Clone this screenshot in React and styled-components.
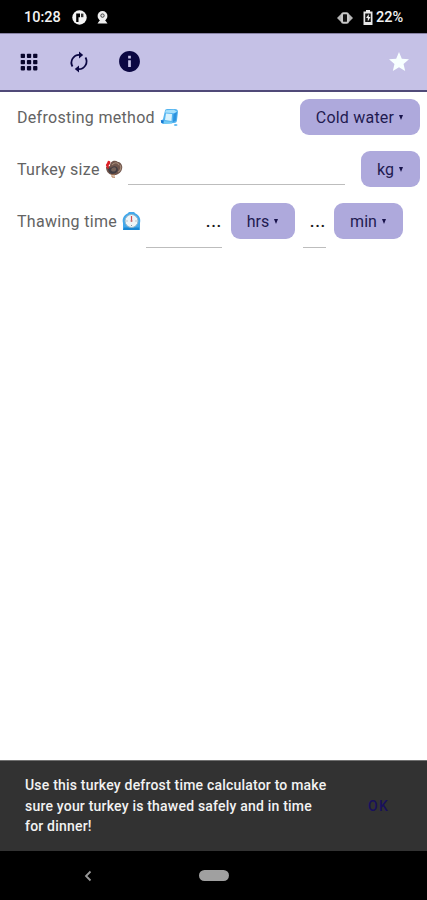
import React from 'react';
import styled, { createGlobalStyle } from 'styled-components';

const GlobalStyle = createGlobalStyle`
    body {
        margin: 0;
        background-color: #ffffff;
        font-family: Roboto, "Liberation Sans", sans-serif;
    }

    * {
        box-sizing: border-box;
    }

    svg {
        display: block;
        flex: none;
    }
`;

const Screen = styled.div`
    display: flex;
    flex-direction: column;
    width: 427px;
    height: 900px;
    overflow: hidden;
`;

const StatusBar = styled.header`
    display: flex;
    align-items: center;
    height: 33px;
    padding: 2px 23px 0 24px;
    background-color: #000000;
    color: #f2f2f2;
    font-size: 14.5px;
    font-weight: 500;
`;

const StatusText = styled.span`
    width: ${props => props.$width}px;
    white-space: nowrap;
`;

const StatusIcons = styled.div`
    display: flex;
    align-items: center;
    gap: ${props => props.$gap}px;
    margin-left: ${props => props.$left};
    margin-right: ${props => props.$right || 0}px;
`;

const AppBar = styled.nav`
    display: flex;
    align-items: center;
    height: 59px;
    padding: 0 16px 0 17px;
    border-top: 1px solid #8681a3;
    border-bottom: 2px solid #504a78;
    background-color: #c5c1e6;
`;

const IconButton = styled.button`
    display: flex;
    align-items: center;
    justify-content: center;
    width: 24px;
    height: 24px;
    margin-right: ${props => props.$right || 0}px;
    margin-left: ${props => props.$push ? 'auto' : 0};
    padding: 0 0 1px;
    border: 0;
    background: none;
    color: ${props => props.$color || '#0b0742'};
`;

const Form = styled.main`
    display: flex;
    flex: 1;
    flex-direction: column;
    gap: 16px;
    padding: 7px 7px 0 17px;
`;

const Row = styled.div`
    display: flex;
    align-items: center;
    height: 36px;
`;

const Label = styled.label`
    width: ${props => props.$width}px;
    color: #636363;
    font-size: 16px;
    letter-spacing: ${props => props.$spacing}px;
    white-space: nowrap;
`;

const Field = styled.div`
    align-self: flex-start;
    width: ${props => props.$width}px;
    height: ${props => props.$height}px;
    margin-left: ${props => props.$left}px;
    padding-top: 8px;
    border-bottom: 1px solid #bdbdbd;
    color: #161616;
    font-size: 17px;
    font-weight: 500;
    letter-spacing: 0.7px;
    line-height: 20px;
    text-align: right;
`;

const UnitButton = styled.button`
    display: flex;
    align-items: center;
    justify-content: center;
    gap: 5px;
    width: ${props => props.$width}px;
    height: 36px;
    margin-left: ${props => props.$left || 'auto'};
    padding: 0 1px 0 0;
    border: 0;
    border-radius: 9px;
    background-color: #aea9dc;
    color: #1f1a50;
    font-family: inherit;
    font-size: 16px;
    letter-spacing: ${props => props.$spacing || 0}px;
    white-space: nowrap;
`;

const Caret = styled.span`
    width: 0;
    height: 0;
    border-top: 5px solid #17124a;
    border-right: 2.5px solid transparent;
    border-left: 2.5px solid transparent;
`;

const Snackbar = styled.div`
    display: flex;
    align-items: center;
    justify-content: space-between;
    height: 91px;
    padding: 0 38px 0 25px;
    border-top: 1px solid #707070;
    background-color: #323232;
`;

const Message = styled.p`
    margin: 0;
    color: #f2f2f2;
    font-size: 14px;
    font-weight: 500;
    letter-spacing: 0.2px;
    line-height: 20.5px;
    white-space: nowrap;
`;

const Confirm = styled.button`
    padding: 0;
    border: 0;
    background: none;
    color: #18105c;
    font-family: inherit;
    font-size: 14px;
    font-weight: 500;
    letter-spacing: 1.2px;
`;

const NavigationBar = styled.footer`
    display: flex;
    align-items: center;
    height: 49px;
    padding-left: 83px;
    background-color: #000000;
`;

const HomePill = styled.span`
    width: 30px;
    height: 11px;
    margin-left: 107px;
    border-radius: 6px;
    background-color: #a0a0a0;
`;

const ParkingIcon = () => (
    <svg width="15" height="15" viewBox="0 0 15 15">
        <circle cx="7.5" cy="7.5" r="7.2" fill="#f4f4f4" />
        <path d="M4.2 12V3.6H8V7.2H6.5V12Z" fill="#000" />
        <path d="M9 3.6h2.4v3.6H9z" fill="#333" />
    </svg>
);

const CameraIcon = () => (
    <svg width="11" height="13" viewBox="0 0 11 13">
        <circle cx="5.5" cy="5" r="4.9" fill="#eee" />
        <circle cx="5.5" cy="4.6" r="1.7" fill="#ddd" stroke="#444" />
        <path d="M3 9h5l2.5 3.6H.5Z" fill="#eee" />
    </svg>
);

const VibrateIcon = () => (
    <svg width="16" height="12" viewBox="0 0 16 12">
        <path d="M0 6l4-4v8zM16 6l-4-4v8z" fill="#b5b5b5" />
        <rect x="5" y="1.2" width="6" height="9.6" rx="1.5" fill="#111" stroke="#c8c8c8" strokeWidth="2" />
    </svg>
);

const BatteryIcon = () => (
    <svg width="10" height="15" viewBox="0 0 10 15">
        <path d="M3 0h4v1.5h2.5V15H.5V1.5H3z" fill="#e8e8e8" />
        <path d="M2.2 3.5h5.6v8.5H2.2z" fill="#111" />
        <path d="M5.8 4L3 8h1.8v3.5L7.5 7H5.8z" fill="#eee" />
    </svg>
);

const GridIcon = () => (
    <svg width="18" height="18" viewBox="0 0 18 18" fill="#08052b">
        {[0.7, 6.9, 13.1].map(y => (
            [0.7, 6.9, 13.1].map(x => (
                <rect key={x + '-' + y} x={x} y={y} width="4.3" height="4.3" rx="0.8" />
            ))
        ))}
    </svg>
);

const RefreshIcon = () => (
    <svg width="24" height="24" viewBox="0 0 24 24">
        <path d="M5.5 16.5A7.8 7.8 0 0 1 12.5 4.8M18.5 7.5A7.8 7.8 0 0 1 11.5 19.2" fill="none" stroke="currentColor" strokeWidth="1.8" />
        <path d="M12 1.5l4.2 3.4L12 8.4zM12 15.6l-4.2 3.5 4.2 3.4z" fill="currentColor" />
    </svg>
);

const InfoIcon = () => (
    <svg width="25" height="25" viewBox="0 0 24 24" fill="currentColor">
        <path d="M12 2C6.48 2 2 6.48 2 12s4.48 10 10 10 10-4.48 10-10S17.52 2 12 2zm1.3 15.3h-2.6v-6.5h2.6v6.5zm0-8.3h-2.6V6.5h2.6V9z" />
    </svg>
);

const StarIcon = () => (
    <svg width="24" height="24" viewBox="0 0 24 24" fill="currentColor">
        <path d="M12 17.27L18.18 21l-1.64-7.03L22 9.24l-7.19-.61L12 2 9.19 8.63 2 9.24l5.46 4.73L5.82 21z" />
    </svg>
);

const IceIcon = () => (
    <svg width="19" height="19" viewBox="0 0 19 19">
        <path d="M5 2.5Q5 1 7 1h8q3 0 3 3l-1 8q0 3-3 3l-10 1q-3 0-2.6-3L3 11z" fill="#55b5f0" />
        <path d="M6 2.2l8-.4 3 2-3 1.4-9-.6z" fill="#a5e0fc" />
        <path d="M6 5.5l6 .5-.5 7-6.5-1z" fill="#d8f2fd" />
        <path d="M13.5 6L17 4l-1 8.5-3 1.5z" fill="#2c92de" />
        <path d="M.8 12l3 .5-.6 2.8-2-.3z" fill="#1879d2" />
        <path d="M4 13l8 1v1.5l-8 .5z" fill="#72caf4" />
        <ellipse cx="15.7" cy="17" rx="1.8" ry=".9" fill="#66bdf2" />
    </svg>
);

const TurkeyIcon = () => (
    <svg width="18" height="18" viewBox="0 0 18 18">
        <path d="M5 6C5 1 10-.5 13 2c3 0 5 4 4 7-.5 3-3 5-6 6H7C3 14 1 11 1 7z" fill="#70554c" />
        <path d="M7 5c2-3 6-3 7 0M15 5c2 3 0 6-2 7" fill="none" stroke="#a58c7a" strokeWidth="1.2" />
        <path d="M2 6c2 1 3 3 5 1 3-2 6 0 6 3-1 4-7 5-9 2z" fill="#403c42" />
        <path d="M7 8c3-2 5 0 4 2-1 2-4 2-5 0" fill="#75625a" />
        <path d="M3 .8c2 0 3 1 2 3L3.5 6 4 9 2 8 .8 5 2 3z" fill="#dc2026" />
        <path d="M7 14v3l3 .3M9 14v2.5" fill="none" stroke="#b27a50" />
    </svg>
);

const ClockIcon = () => (
    <svg width="19" height="20" viewBox="0 0 19 20">
        <path d="M7 1h5l1.5 1.5C17.5 4.5 19 8 18 12v7H1v-7C0 8 1.5 4.5 5.5 2.5z" fill="#43a8eb" />
        <path d="M2 16.5h15V19H1z" fill="#1987d3" />
        <circle cx="9.5" cy="10" r="6.5" fill="#eef4f7" stroke="#8eb5cb" />
        <path d="M9.5 5v5" stroke="#d64a4e" strokeWidth="1.2" />
        <circle cx="9.5" cy="10" r="1" fill="#c36b70" />
        <path d="M4.5 10h1M13.5 10h1M9.5 14v1" stroke="#8799a4" />
    </svg>
);

const BackIcon = () => (
    <svg width="9" height="12" viewBox="0 0 9 12">
        <path d="M7.5 1.5L3 6l4.5 4.5" fill="none" stroke="#999" strokeWidth="1.8" />
    </svg>
);

function Unit({ children, width, left, spacing }) {
    return (
        <UnitButton $width={width} $left={left} $spacing={spacing}>
            {children}
            <Caret />
        </UnitButton>
    );
}

function App() {
    return (
        <Screen>
            <GlobalStyle />
            <StatusBar>
                <StatusText $width={48}>10:28</StatusText>
                <StatusIcons $gap={10} $left="0">
                    <ParkingIcon />
                    <CameraIcon />
                </StatusIcons>
                <StatusIcons $gap={10} $left="auto" $right={3}>
                    <VibrateIcon />
                    <BatteryIcon />
                </StatusIcons>
                <StatusText $width={28}>22%</StatusText>
            </StatusBar>
            <AppBar>
                <IconButton $right={26}><GridIcon /></IconButton>
                <IconButton $right={26}><RefreshIcon /></IconButton>
                <IconButton><InfoIcon /></IconButton>
                <IconButton $push $color="#f7ffff"><StarIcon /></IconButton>
            </AppBar>
            <Form>
                <Row>
                    <Label $width={143} $spacing={0.3}>Defrosting method</Label>
                    <IceIcon />
                    <Unit width={120} spacing={0.2}>Cold water</Unit>
                </Row>
                <Row>
                    <Label $width={88} $spacing={0.3}>Turkey size</Label>
                    <TurkeyIcon />
                    <Field $width={217} $height={34} $left={5} />
                    <Unit width={59}>kg</Unit>
                </Row>
                <Row>
                    <Label $width={105} $spacing={0.3}>Thawing time</Label>
                    <ClockIcon />
                    <Field $width={76} $height={45} $left={5}>...</Field>
                    <Unit width={64} left="9px">hrs</Unit>
                    <Field $width={23} $height={45} $left={8}>...</Field>
                    <Unit width={69} left="8px">min</Unit>
                </Row>
            </Form>
            <Snackbar>
                <Message>
                    Use this turkey defrost time calculator to make<br />
                    sure your turkey is thawed safely and in time<br />
                    for dinner!
                </Message>
                <Confirm>OK</Confirm>
            </Snackbar>
            <NavigationBar>
                <BackIcon />
                <HomePill />
            </NavigationBar>
        </Screen>
    );
}

export default App;
